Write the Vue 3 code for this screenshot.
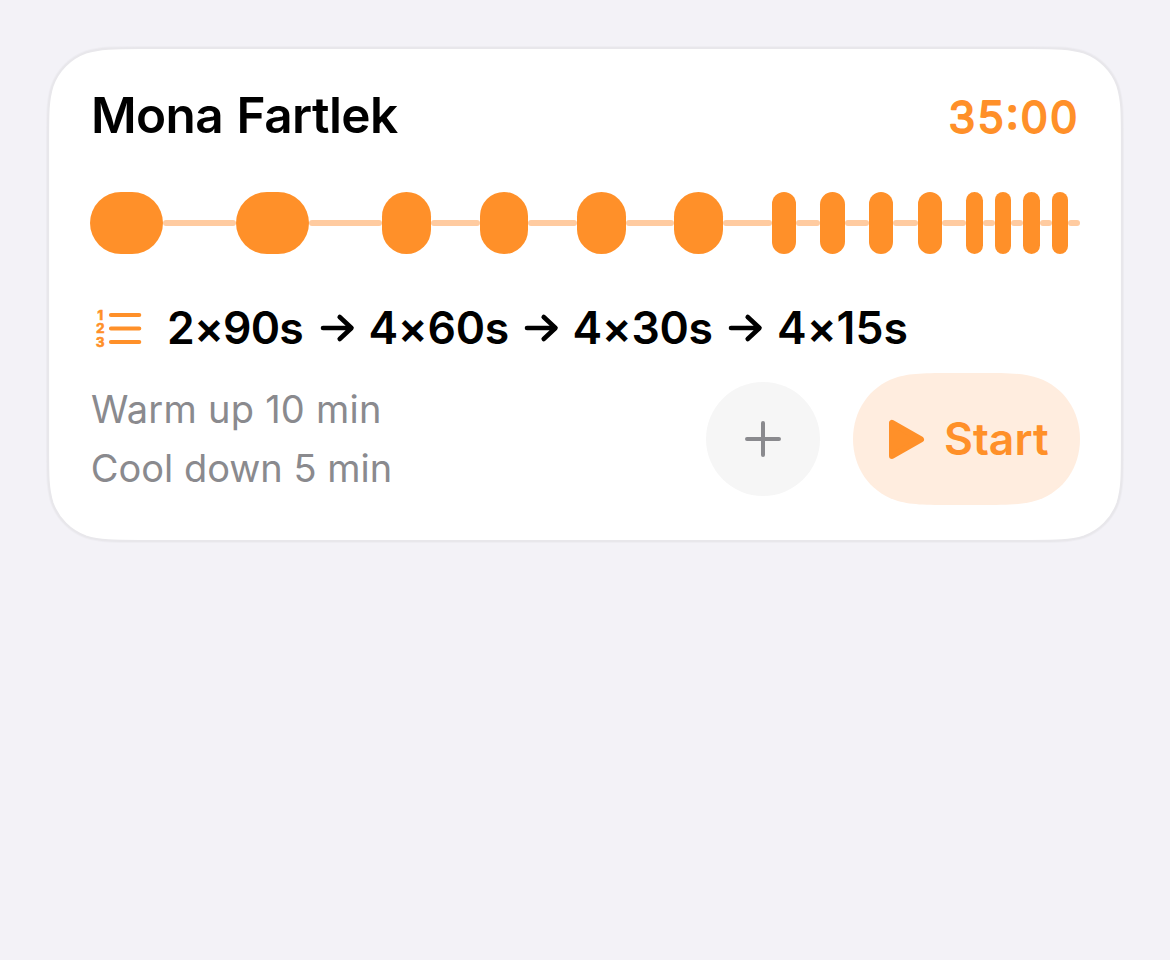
<template>
  <main class="screen">
    <section class="card">
      <svg class="card-shape" viewBox="0 0 1074 493" aria-hidden="true">
        <path class="card-halo" :d="cardPath" />
        <path class="card-fill" :d="cardPath" />
      </svg>

      <header class="header">
        <h1 class="title">Mona Fartlek</h1>
        <svg class="duration" width="132" height="56" viewBox="0 0 132 56">
          <text x="0.5" y="46" textLength="129" lengthAdjust="spacing">35:00</text>
        </svg>
      </header>

      <div class="timeline">
        <template v-for="(step, i) in steps" :key="i">
          <span class="work" :style="{ width: step.work + 'px' }"></span>
          <span class="rest" :style="{ width: step.rest + 'px' }"></span>
        </template>
      </div>

      <div class="sequence">
        <svg class="list-icon" width="48" height="42" viewBox="0 0 48 42">
          <text x="5.2" y="13">1</text>
          <text x="5.2" y="26.4">2</text>
          <text x="5.2" y="39.8">3</text>
          <path d="M15.9 8H44.3M15.9 21.4H44.3M15.9 35H44.3" />
        </svg>
        <template v-for="(set, i) in sets" :key="set.label">
          <svg v-if="i" class="arrow" width="35" height="30" viewBox="0 0 35 30">
            <path d="M3 15H31M19.7 4L31.5 15L19.7 26" />
          </svg>
          <span class="set" :class="set.size">{{ set.label }}</span>
        </template>
      </div>

      <footer class="footer">
        <div class="notes">
          <p class="warm">Warm up 10 min</p>
          <p class="cool">Cool down 5 min</p>
        </div>
        <button class="add" aria-label="Add">
          <svg width="38" height="38" viewBox="0 0 38 38">
            <path d="M19 3V35M3 19H35" />
          </svg>
        </button>
        <button class="start">
          <svg class="start-shape" viewBox="0 0 227 132" aria-hidden="true">
            <path :d="startPath" />
          </svg>
          <svg class="play" width="36" height="40" viewBox="0 0 36 40">
            <path d="M3 3.8V37L32 20.4Z" />
          </svg>
          <span class="start-label">Start</span>
        </button>
      </footer>
    </section>
  </main>
</template>

<script setup>
// interval pairs, widths in px
const steps = [
  ...Array(2).fill({ work: 73.1, rest: 73 }),
  ...Array(4).fill({ work: 48.7, rest: 48.7 }),
  ...Array(4).fill({ work: 24.35, rest: 24.35 }),
  ...Array(4).fill({ work: 16.3, rest: 12.1 }),
]

const sets = [
  { label: '2×90s', size: 'first' },
  { label: '4×60s', size: 'mid' },
  { label: '4×30s', size: 'mid' },
  { label: '4×15s', size: 'last' },
]

// rounded rect with continuous corners
function smoothRect(w, h, r) {
  const a = 1.528665 * r
  const b = 1.08849 * r
  const c = 0.86841 * r
  const d = 0.63149 * r
  const e = 0.07491 * r
  const f = 0.37283 * r
  const g = 0.16906 * r
  return [
    `M${a} 0H${w - a}`,
    `C${w - b} 0 ${w - c} 0 ${w - d} ${e}`,
    `C${w - f} ${g} ${w - g} ${f} ${w - e} ${d}`,
    `C${w} ${c} ${w} ${b} ${w} ${a}`,
    `V${h - a}`,
    `C${w} ${h - b} ${w} ${h - c} ${w - e} ${h - d}`,
    `C${w - g} ${h - f} ${w - f} ${h - g} ${w - d} ${h - e}`,
    `C${w - c} ${h} ${w - b} ${h} ${w - a} ${h}`,
    `H${a}`,
    `C${b} ${h} ${c} ${h} ${d} ${h - e}`,
    `C${f} ${h - g} ${g} ${h - f} ${e} ${h - d}`,
    `C0 ${h - c} 0 ${h - b} 0 ${h - a}`,
    `V${a}`,
    `C0 ${b} 0 ${c} ${e} ${d}`,
    `C${g} ${f} ${f} ${g} ${d} ${e}`,
    `C${c} 0 ${b} 0 ${a} 0Z`,
  ].join('')
}

const cardPath = smoothRect(1074, 493, 60)
const startPath =
  'M101 0H126C155 0 170 0 185 5C211 14 227 38 227 66C227 94 211 118 185 127C170 132 155 132 126 132' +
  'H101C72 132 57 132 42 127C16 118 0 94 0 66C0 38 16 14 42 5C57 0 72 0 101 0Z'
</script>

<style>
body {
  margin: 0;
  background: #f3f2f7;
}
</style>

<style scoped>
.screen {
  box-sizing: border-box;
  min-height: 960px;
  padding: 48px;
  background: #f3f2f7;
  font-family: Inter, "Liberation Sans", sans-serif;
}
.card {
  position: relative;
  box-sizing: border-box;
  width: 1074px;
  height: 493px;
  padding: 39px 42px 36px;
  display: flex;
  flex-direction: column;
}
.card-shape {
  position: absolute;
  inset: 0;
  width: 1074px;
  height: 493px;
  overflow: visible;
}
.card-halo {
  fill: none;
  stroke: #eeedf2;
  stroke-width: 4;
}
.card-fill {
  fill: #fff;
  stroke: #e8e7eb;
  stroke-width: 2.2;
}
.header, .timeline, .sequence, .footer { position: relative; }

.header {
  display: flex;
  justify-content: space-between;
  height: 56px;
}
.title {
  margin: 0;
  padding-left: 1px;
  font-size: 49.5px;
  font-weight: 600;
  line-height: 56px;
  letter-spacing: -0.6px;
  word-spacing: 1.6px;
  color: #000;
  white-space: nowrap;
}
.duration {
  overflow: visible;
  fill: #ff9029;
  stroke: #ff9029;
  stroke-width: 1.8;
  stroke-linejoin: round;
  font-size: 43.5px;
  font-weight: 400;
}

.timeline {
  display: flex;
  align-items: center;
  height: 62px;
  margin-top: 49px;
}
.work {
  flex: none;
  height: 62px;
  border-radius: 31px;
  background: #ff9029;
}
.rest {
  flex: none;
  height: 6px;
  border-radius: 3px;
  background: #ffcba0;
}

.sequence {
  display: flex;
  align-items: center;
  height: 56px;
  margin-top: 46px;
  padding-left: 5px;
}
.list-icon {
  flex: none;
  margin-right: 24px;
  overflow: visible;
  fill: #ff9029;
}
.list-icon text {
  font-size: 13.5px;
  font-weight: 800;
  text-anchor: middle;
  stroke: #ff9029;
  stroke-width: 0.4;
}
.list-icon path {
  stroke: #ff9029;
  stroke-width: 4;
  stroke-linecap: round;
}
/* calt off keeps the × on the lowercase height */
.set {
  flex: none;
  font-size: 44.5px;
  font-weight: 600;
  font-feature-settings: "calt" 0;
  line-height: 56px;
  color: #000;
  white-space: nowrap;
}
.first {
  width: 138.5px;
  letter-spacing: -0.8px;
}
.mid {
  width: 141px;
  letter-spacing: -0.3px;
}
.arrow {
  flex: none;
  margin: 0 14px;
  fill: none;
  stroke: #000;
  stroke-width: 4.6;
  stroke-linecap: round;
  stroke-linejoin: round;
}
.last { padding-left: 0.5px; }

.footer {
  display: flex;
  align-items: center;
  height: 132px;
  margin-top: 17px;
}
.notes {
  flex: 1;
  color: #8a8a8e;
}
.notes p {
  margin: 0;
  font-size: 38px;
  line-height: 59px;
  white-space: nowrap;
}
.notes .warm {
  padding-left: 1px;
  letter-spacing: 0.25px;
}
.notes .cool { padding-left: 0.7px; }
button {
  flex: none;
  border: 0;
  padding: 0;
  font-family: inherit;
  display: flex;
  align-items: center;
}
.add {
  justify-content: center;
  width: 114px;
  height: 114px;
  margin-right: 33px;
  border-radius: 50%;
  background: #f6f6f6;
}
.add path {
  fill: none;
  stroke: #8a8a8e;
  stroke-width: 4;
  stroke-linecap: round;
}
.start {
  position: relative;
  box-sizing: border-box;
  width: 227px;
  height: 132px;
  padding-left: 36px;
  background: none;
}
.start-shape {
  position: absolute;
  inset: 0;
  width: 227px;
  height: 132px;
  fill: #ffeddf;
}
.play {
  position: relative;
  fill: #ff9029;
  stroke: #ff9029;
  stroke-width: 6;
  stroke-linejoin: round;
}
.start-label {
  position: relative;
  margin-left: 19px;
  font-size: 44.5px;
  font-weight: 600;
  color: #ff9029;
}
</style>
